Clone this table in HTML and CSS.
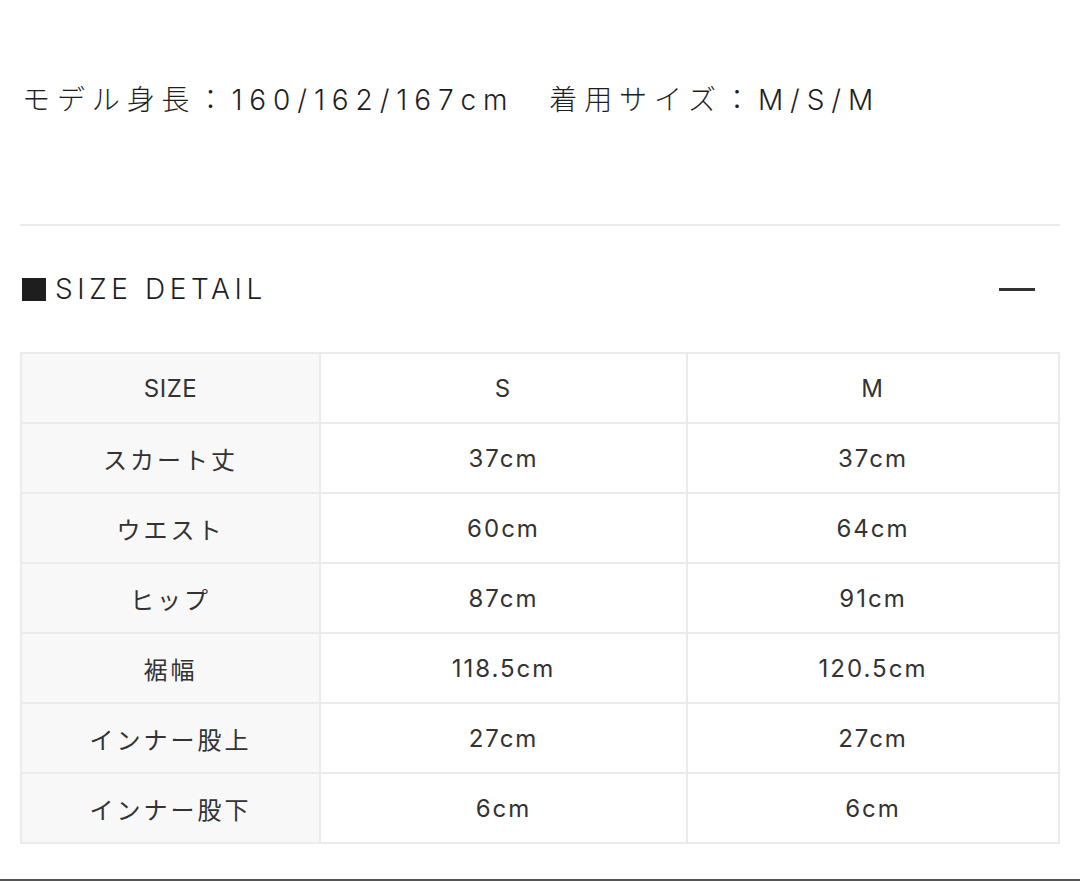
FILE: index.html
```html
<!DOCTYPE html>
<html lang="ja">
<head>
<meta charset="utf-8">
<title>SIZE DETAIL</title>
<link rel="stylesheet" href="styles.css">
</head>
<body>
<main class="page">
  <p class="model">モデル身長：160/162/167cm　着用サイズ：M/S/M</p>
  <hr class="divider">
  <div class="section-head">
    <h2 class="section-title"><span class="square"></span>SIZE DETAIL</h2>
    <span class="minus"></span>
  </div>
  <table class="size-table">
    <tbody>
      <tr class="head-row"><th>SIZE</th><td>S</td><td>M</td></tr>
      <tr><th>スカート丈</th><td>37cm</td><td>37cm</td></tr>
      <tr><th>ウエスト</th><td>60cm</td><td>64cm</td></tr>
      <tr><th>ヒップ</th><td>87cm</td><td>91cm</td></tr>
      <tr><th>裾幅</th><td>118.5cm</td><td>120.5cm</td></tr>
      <tr><th>インナー股上</th><td>27cm</td><td>27cm</td></tr>
      <tr><th>インナー股下</th><td>6cm</td><td>6cm</td></tr>
    </tbody>
  </table>
</main>
<div class="bottom-bar"></div>
</body>
</html>
```
FILE: styles.css
```css
html, body {
  margin: 0;
  padding: 0;
  background: #fff;
}
body {
  width: 1080px;
  height: 881px;
  overflow: hidden;
  position: relative;
  font-family: "Inter", "Noto Sans CJK JP", sans-serif;
  color: #222;
}
.page {
  padding: 0 20px;
}
.model {
  margin: 0;
  padding-top: 80px;
  height: 40px;
  line-height: 40px;
  font-size: 28px;
  font-weight: 300;
  letter-spacing: 6.9px;
  padding-left: 2px;
  color: #1e1e1e;
}
.divider {
  margin: 104px 0 0;
  border: 0;
  border-top: 2px solid #ebebeb;
  height: 0;
}
.section-head {
  display: flex;
  align-items: center;
  justify-content: space-between;
  height: 60px;
  margin-top: 33px;
  padding-left: 2px;
}
.section-title {
  margin: 0;
  display: flex;
  align-items: center;
  font-size: 28px;
  font-weight: 300;
  letter-spacing: 4.6px;
  color: #1e1e1e;
}
.square {
  width: 24px;
  height: 23px;
  background: #1e1e1e;
  margin-right: 9px;
}
.minus {
  width: 36px;
  height: 3px;
  background: #333;
  margin-right: 25px;
}
.size-table {
  margin-top: 33px;
  width: 1040px;
  border-collapse: collapse;
  table-layout: fixed;
  font-size: 24px;
  letter-spacing: 2px;
  color: #333;
}
.size-table th,
.size-table td {
  border: 2px solid #ebebeb;
  height: 68px;
  padding: 0;
  text-align: center;
  font-weight: 400;
}
.size-table th {
  width: 297px;
  background: #f8f8f8;
  letter-spacing: 3px;
}
.size-table .head-row th {
  letter-spacing: 0.5px;
}
.size-table td:nth-child(2) {
  width: 365px;
}
.bottom-bar {
  position: absolute;
  left: 0;
  right: 0;
  bottom: 0;
  height: 2px;
  background: #555;
}
```
